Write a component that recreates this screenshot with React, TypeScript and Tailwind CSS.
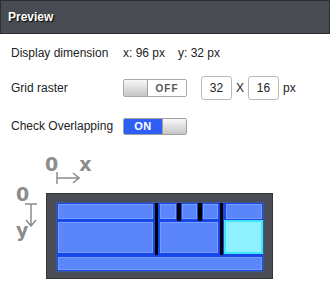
import React from "react";

const font = { fontFamily: '"Liberation Sans", Arial, sans-serif' };
const axisFont = { fontFamily: '"DejaVu Sans", sans-serif' };

const blk = "bg-[#5b86fb] border border-[#759cff] shadow-[0_0_1px_#2a5cff]";

export default function App() {
  return (
    <div className="w-[330px] h-[298px] bg-white text-[#222] text-[12px] overflow-hidden" style={font}>
      <div className="h-[34px] bg-[#484b52] border border-[#2c2e33] flex items-center pl-[7px]">
        <span className="text-white font-bold text-[12px] [text-shadow:1px_1px_1px_#000]">Preview</span>
      </div>

      <div className="pl-[11px]">
        <div className="mt-[8px] h-[22px] flex items-center">
          <span className="w-[112px]">Display dimension</span>
          <span className="w-[55px]">x: 96 px</span>
          <span>y: 32 px</span>
        </div>

        <div className="mt-[12px] h-[24px] flex items-center">
          <span className="w-[112px]">Grid raster</span>
          <div className="w-[64px] h-[18px] flex rounded-[2px] border border-[#a9a9a9] bg-white overflow-hidden">
            <div className="w-[24px] h-full bg-linear-to-b from-[#f8f8f8] to-[#c6c6c6] border-r border-[#9f9f9f]" />
            <div className="flex-1 flex items-center justify-center text-[10px] font-bold text-[#555] tracking-[1px]">OFF</div>
          </div>
          <div className="ml-[14px] w-[31px] h-[24px] border border-[#b8b8b8] rounded-[3px] flex items-center justify-center">32</div>
          <span className="ml-[4px] w-[12px]">X</span>
          <div className="w-[31px] h-[24px] border border-[#b8b8b8] rounded-[3px] flex items-center justify-center">16</div>
          <span className="ml-[4px]">px</span>
        </div>

        <div className="mt-[14px] h-[24px] flex items-center">
          <span className="w-[112px]">Check Overlapping</span>
          <div className="w-[64px] h-[17px] flex rounded-[2px] border border-[#9f9f9f] overflow-hidden">
            <div className="flex-1 bg-[#2d5ff6] flex items-center justify-center text-white font-bold text-[11px] tracking-[0.5px]">ON</div>
            <div className="w-[24px] h-full bg-linear-to-b from-[#f8f8f8] to-[#c6c6c6] border-l border-[#9f9f9f]" />
          </div>
        </div>
      </div>

      <div className="mt-[4px] flex text-[#8c8c8c] font-bold" style={axisFont}>
        {/* left axis */}
        <div className="w-[46px] pt-[43px] pl-[16px] flex flex-col items-start">
          <span className="text-[19px] leading-[19px]">0</span>
          <svg className="ml-[8px] -mt-[1px]" width="14" height="24" fill="none" stroke="#8c8c8c" strokeWidth="1.5">
            <path d="M1 1 H13 M7 1 V23 M2 17 L7 23 L12 17" />
          </svg>
          <span className="-mt-[6px] text-[19px] leading-[19px]">y</span>
        </div>

        <div className="flex flex-col">
          {/* top axis */}
          <div className="h-[51px] pt-[13px] -ml-[1px] flex items-start">
            <span className="text-[19px] leading-[19px]">0</span>
            <svg className="-ml-[2px]" width="24" height="30" fill="none" stroke="#8c8c8c" strokeWidth="1.5">
              <path d="M1 17 V29 M1 23 H23 M17 18 L23 23 L17 28" />
            </svg>
            <span className="-ml-[1px] text-[19px] leading-[19px]">x</span>
          </div>

          {/* canvas */}
          <div className="w-[227px] h-[86px] bg-[#4a4d55] border border-[#34363b] pl-[10px] pt-[9px]">
            <div className="w-[206px] h-[68px] bg-[#1446ea] shadow-[0_0_2px_#3a6cff] flex flex-col">
              <div className="h-[52px] flex">
                <div className="ml-[1px] pt-[1px] w-[95px] flex flex-col gap-[3px]">
                  <div className={`h-[15px] ${blk}`} />
                  <div className={`h-[31px] ${blk}`} />
                </div>
                <div className="ml-[2px] w-[3px] h-[52px] bg-black" />
                <div className="ml-[2px] pt-[1px] w-[58px] flex flex-col gap-[3px]">
                  <div className="h-[15px] flex">
                    <div className={`w-[16px] ${blk}`} />
                    <div className="ml-[1px] -mt-[1px] w-[4px] h-[18px] bg-black" />
                    <div className={`ml-[1px] w-[15px] ${blk}`} />
                    <div className="ml-[1px] -mt-[1px] w-[4px] h-[18px] bg-black" />
                    <div className={`ml-[1px] w-[15px] ${blk}`} />
                  </div>
                  <div className={`h-[31px] ${blk}`} />
                </div>
                <div className="ml-[2px] w-[3px] h-[52px] bg-black" />
                <div className="ml-[1px] w-[39px] flex flex-col">
                  <div className={`ml-[2px] mt-[1px] w-[36px] h-[15px] ${blk}`} />
                  <div className="mt-[1px] w-[39px] h-[34px] bg-[#8ff0ff] border-2 border-[#3fe6ff]" />
                </div>
              </div>
              <div className={`ml-[1px] mt-[2px] w-[204px] h-[13px] ${blk}`} />
            </div>
          </div>
        </div>
      </div>
    </div>
  );
}
